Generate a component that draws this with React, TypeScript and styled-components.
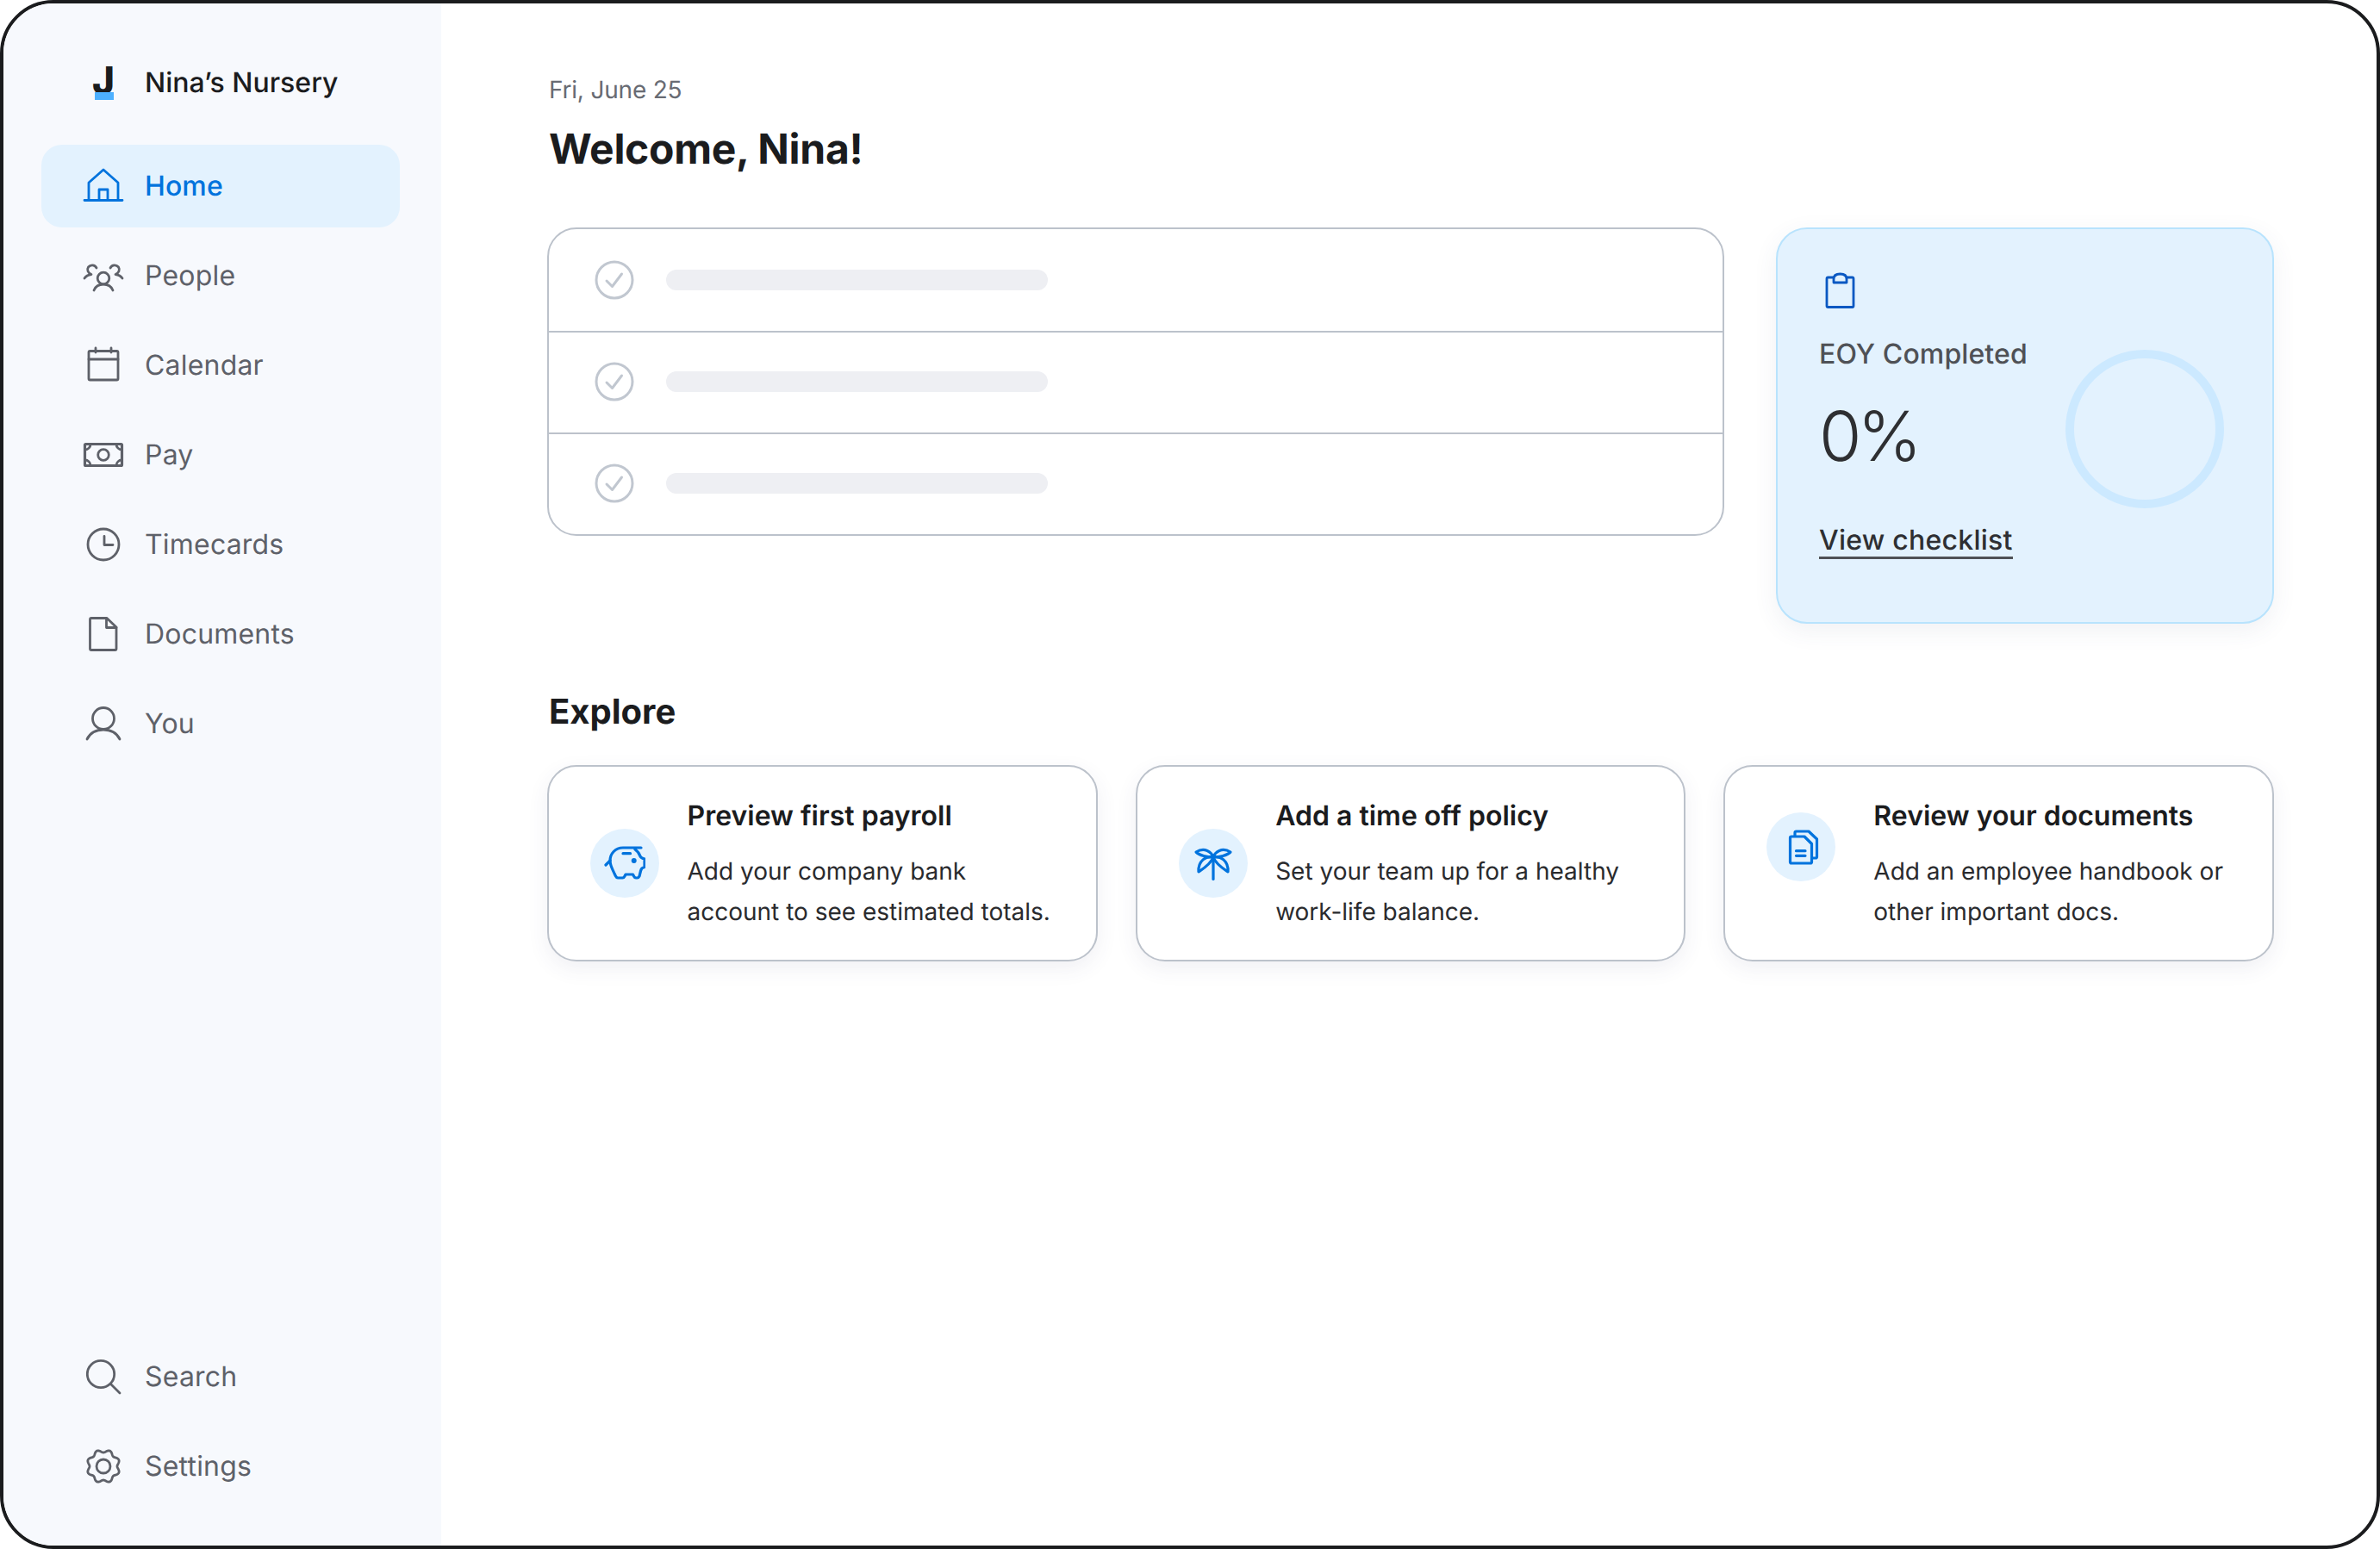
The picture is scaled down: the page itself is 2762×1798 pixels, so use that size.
import React from "react";
import styled, { createGlobalStyle } from "styled-components";

const Global = createGlobalStyle`
  html, body { margin: 0; padding: 0; background: #fff; }
  body { font-family: Inter, "Liberation Sans", sans-serif; text-rendering: geometricPrecision; }
  * { box-sizing: border-box; }
`;

const Frame = styled.div`
  width: 2762px; height: 1798px; display: flex; overflow: hidden;
  border: 4px solid #1b1c1e; border-radius: 62px; background: #fff;
`;
const Sidebar = styled.aside`
  width: 508px; flex: none; display: flex; flex-direction: column;
  padding: 44px 48px 44px 44px; background: #f7f9fd;
`;
const Brand = styled.div`
  height: 96px; margin-bottom: 24px; display: flex; align-items: center; gap: 24px; padding-left: 48px;
  font-size: 32px; font-weight: 500; color: #1b1c1e;
`;
const LogoMark = styled.span`
  position: relative; width: 48px; height: 48px; flex: none; display: block;
  font-size: 44px; line-height: 42px; font-weight: 800; text-align: center; color: #1b1c1e;
  &::after {
    content: ""; position: absolute; left: 14px; top: 35px; width: 22px; height: 9px; background: #4db0ff;
  }
`;
const BrandName = styled.span`
  margin-bottom: 2px;
`;
const NavList = styled.nav<{ $bottom?: boolean }>`
  display: flex; flex-direction: column; gap: 8px;
  margin-top: ${(p) => (p.$bottom ? "auto" : "0")};
`;
const NavItem = styled.a<{ $active?: boolean }>`
  height: 96px; display: flex; align-items: center; gap: 24px; padding-left: 48px;
  border-radius: 24px; font-size: 32px;
  letter-spacing: ${(p) => (p.$active ? "0.1px" : "0.2px")};
  font-weight: ${(p) => (p.$active ? 500 : 400)};
  color: ${(p) => (p.$active ? "#0073dd" : "#5e6169")};
  background: ${(p) => (p.$active ? "#e3f2fe" : "transparent")};
`;
const NavLabel = styled.span`
  margin-bottom: 2px;
`;
const Glyph = styled.svg<{ $weight?: number }>`
  width: 48px; height: 48px; flex: none; display: block; fill: none; stroke: currentColor;
  stroke-width: ${(p) => p.$weight ?? 2.8}; stroke-linecap: round; stroke-linejoin: round;
`;
const PayFrame = styled.rect`
  stroke-width: 3.2;
`;
const Main = styled.main`
  flex: 1; min-width: 0; padding: 80px 119px 0 123px; display: flex; flex-direction: column;
`;
const DateLine = styled.div`
  height: 40px; line-height: 40px; margin-left: 2px; font-size: 28px; letter-spacing: -0.2px; color: #686b73;
`;
const Title = styled.h1`
  margin: 19px 0 0 2px; height: 60px; line-height: 60px; font-size: 48px; font-weight: 700;
  letter-spacing: -0.3px; color: #1b1c1e;
`;
const TopRow = styled.div`
  margin-top: 61px; display: grid; grid-template-columns: 1366px 578px; gap: 60px; align-items: start;
`;
const Checklist = styled.div`
  height: 358px; border: 2px solid #bcc2cb; border-radius: 34px; display: grid; grid-template-rows: repeat(3, 1fr);
  overflow: hidden; background: #fff;
`;
const CheckRow = styled.div`
  display: flex; align-items: center; gap: 36px; padding-left: 52px;
  & + & { border-top: 2px solid #bcc2cb; padding-bottom: 2px; }
`;
const CheckGlyph = styled(Glyph)`
  color: #c1c7d0; stroke-width: 3;
`;
const Placeholder = styled.div`
  width: 443px; height: 24px; border-radius: 12px; background: #eeeff3;
`;
const Progress = styled.section`
  position: relative; height: 460px; padding: 49px 48px 0; border: 2px solid #b8e3fd; border-radius: 36px;
  background: #e3f2fe; box-shadow: 0 8px 28px rgba(60, 80, 120, 0.08);
`;
const ClipGlyph = styled(Glyph)`
  color: #0a58c2; margin: 0 0 28px 2px;
`;
const ProgressLabel = styled.div`
  font-size: 32px; line-height: 40px; font-weight: 500; letter-spacing: 0.1px; color: #4f5156;
`;
const Percent = styled.div`
  margin-top: 28px; font-size: 80px; line-height: 96px; font-weight: 300; color: #2e2f32; letter-spacing: -5px;
`;
const ChecklistLink = styled.a`
  display: inline-block; margin-top: 53px; font-size: 32px; line-height: 38px; font-weight: 500; color: #2e2f32;
  letter-spacing: 0.25px; border-bottom: 3px solid #4f5156;
`;
const Ring = styled.div`
  position: absolute; left: 333.5px; top: 140px; width: 184px; height: 184px; border-radius: 50%;
  border: 10px solid #cce9ff;
`;
const SectionTitle = styled.h2`
  margin: 77px 0 0 2px; height: 50px; line-height: 50px; font-size: 40px; font-weight: 700; color: #1b1c1e;
`;
const CardGrid = styled.div`
  margin-top: 37px; display: grid; grid-template-columns: repeat(3, 1fr); gap: 44px;
`;
const Card = styled.article<{ $raised?: boolean }>`
  height: 228px; border: 2px solid #bcc2cb; border-radius: 34px; background: #fff;
  box-shadow: 0 8px 24px rgba(60, 70, 110, 0.08);
  display: flex; align-items: ${(p) => (p.$raised ? "flex-start" : "center")};
  padding-left: 48px; gap: ${(p) => (p.$raised ? "44px" : "32.5px")};
`;
const IconDisc = styled.div<{ $raised?: boolean }>`
  width: 80px; height: 80px; flex: none; border-radius: 50%; background: #e3f2fe; color: #0073dd;
  display: flex; align-items: center; justify-content: center;
  margin-top: ${(p) => (p.$raised ? "53px" : "0")};
`;
const CardBody = styled.div`
  align-self: flex-start; padding-top: 37px;
`;
const CardTitle = styled.h3`
  margin: 0; font-size: 32px; line-height: 40px; font-weight: 600; color: #1b1c1e;
`;
const CardText = styled.p`
  margin: 20.5px 0 0; font-size: 28px; line-height: 47px; color: #2a2b2e; white-space: pre-line;
`;

const gearPath = (() => {
  const pts: string[] = [];
  for (let i = 0; i < 160; i++) {
    const t = (i / 160) * Math.PI * 2;
    const r = 17.7 - 1.7 * Math.cos(8 * t);
    pts.push(`${(24 + r * Math.sin(t)).toFixed(2)} ${(24 - r * Math.cos(t)).toFixed(2)}`);
  }
  return `M${pts.join("L")}Z`;
})();

const HomeIcon = () => (
  <Glyph viewBox="0 0 48 48">
    <path d="M2 40.5H46M7 40V20L24 5L41 20V40M19 40V28H29V40" />
  </Glyph>
);
const PeopleIcon = () => (
  <Glyph viewBox="0 0 48 48">
    <circle cx="24" cy="27" r="6.8" />
    <path d="M13 41C15 36 19 34 24 34C29 34 33 36 35 41" />
    <path d="M2 27C4 24 6.5 23 10 22.5C6 21 4.5 17 6.5 14C9 11 14 11 16 15" />
    <path d="M46 27C44 24 41.5 23 38 22.5C42 21 43.5 17 41.5 14C39 11 34 11 32 15" />
  </Glyph>
);
const CalendarIcon = () => (
  <Glyph viewBox="0 0 48 48">
    <rect x="7" y="7.5" width="34" height="33.5" rx="1.5" />
    <path d="M7 17H41M15 4V9M33 4V9" />
  </Glyph>
);
const PayIcon = () => (
  <Glyph viewBox="0 0 48 48">
    <PayFrame x="2.5" y="11.5" width="43" height="25" rx="1" />
    <circle cx="24" cy="24" r="6.3" />
    <path d="M9 12C9 15 6 18 3 18M39 12C39 15 42 18 45 18M9 36C9 33 6 30 3 30M39 36C39 33 42 30 45 30" />
  </Glyph>
);
const ClockIcon = () => (
  <Glyph viewBox="0 0 48 48">
    <circle cx="24" cy="24" r="18" />
    <path d="M25 14.5V24.5H35" />
  </Glyph>
);
const DocIcon = () => (
  <Glyph viewBox="0 0 48 48">
    <path d="M10 5.5H28L39 16V41C39 42 38.5 42.5 37.5 42.5H10C9 42.5 8.5 42 8.5 41V7C8.5 6 9 5.5 10 5.5Z" />
    <path d="M27.5 6V16.5H39" />
  </Glyph>
);
const UserIcon = () => (
  <Glyph viewBox="0 0 48 48">
    <circle cx="24" cy="18" r="12.5" />
    <path d="M5 42C9 34 16 31 24 31C32 31 39 34 43 42" />
  </Glyph>
);
const SearchIcon = () => (
  <Glyph viewBox="0 0 48 48">
    <circle cx="21" cy="21" r="15.7" />
    <path d="M32.5 32.5L43 43" />
  </Glyph>
);
const GearIcon = () => (
  <Glyph viewBox="0 0 48 48">
    <path d={gearPath} />
    <circle cx="24" cy="24" r="8" />
  </Glyph>
);
const CheckIcon = () => (
  <CheckGlyph viewBox="0 0 48 48">
    <circle cx="24" cy="24" r="21" />
    <path d="M15 25L21.5 31.5L32.5 17" />
  </CheckGlyph>
);
const ClipboardIcon = () => (
  <ClipGlyph viewBox="0 0 48 48">
    <path d="M14 7H8.5C7.5 7 7 7.5 7 8.5V40C7 41 7.5 41.5 8.5 41.5H36.5C37.5 41.5 38 41 38 40V8.5C38 7.5 37.5 7 36.5 7H31" />
    <path d="M15 13V9C15 5 18 3 22.5 3C27 3 30 5 30 9V13Z" />
  </ClipGlyph>
);
const PigIcon = () => (
  <Glyph viewBox="0 0 48 48" $weight={3.2}>
    <path d="M43 6H22C13 6 7 13 7 21C7 27 10 31 12 36L13.5 39C14 40 14.5 41 16 41H21.5C23 41 23.5 40 24 39L25 37H33.5L34.5 39C35 40 35.5 41 37 41H38.5C40 41 40.5 40 41 39L42.5 33C43 30 44 29 47 28.5V19C45 18.5 43 18 42 16C41 13 39 10 36 8" />
    <path d="M7 21L2 26M22 12.7H30.5" />
    <circle cx="34.7" cy="21" r="1.4" fill="currentColor" />
  </Glyph>
);
const PalmIcon = () => (
  <Glyph viewBox="0 0 48 48" $weight={3.2}>
    <path d="M24 17V42.5" />
    <path d="M24 17C22 11 14 5 4 11C8 15 17 17 24 17Z" />
    <path d="M24 17C16 15 6 21 7 34C13 30 21 25 24 17Z" />
    <path d="M24 17C26 11 34 5 44 11C40 15 31 17 24 17Z" />
    <path d="M24 17C32 15 42 21 41 34C35 30 27 25 24 17Z" />
  </Glyph>
);
const DocsIcon = () => (
  <Glyph viewBox="0 0 48 48" $weight={3.2}>
    <path d="M13 12H28L36.5 20.5V41.5C36.5 42.5 36 43 35 43H13C12 43 11.5 42.5 11.5 41.5V13.5C11.5 12.5 12 12 13 12Z" />
    <path d="M17 11V7.5C17 6.5 17.5 6 18.5 6H33L42.5 15V35.5C42.5 36.5 42 37 41 37H37" />
    <path d="M18.5 28.7H29M18.5 34.3H29" />
  </Glyph>
);

const mainNav = [
  { label: "Home", icon: <HomeIcon />, active: true },
  { label: "People", icon: <PeopleIcon /> },
  { label: "Calendar", icon: <CalendarIcon /> },
  { label: "Pay", icon: <PayIcon /> },
  { label: "Timecards", icon: <ClockIcon /> },
  { label: "Documents", icon: <DocIcon /> },
  { label: "You", icon: <UserIcon /> },
];
const footNav = [
  { label: "Search", icon: <SearchIcon /> },
  { label: "Settings", icon: <GearIcon /> },
];
const cards = [
  { title: "Preview first payroll", text: "Add your company bank\naccount to see estimated totals.", icon: <PigIcon /> },
  { title: "Add a time off policy", text: "Set your team up for a healthy\nwork-life balance.", icon: <PalmIcon /> },
  { title: "Review your documents", text: "Add an employee handbook or\nother important docs.", icon: <DocsIcon />, raised: true },
];

export default function App() {
  return (
    <>
      <Global />
      <Frame>
        <Sidebar>
          <Brand>
            <LogoMark>J</LogoMark>
            <BrandName>Nina’s Nursery</BrandName>
          </Brand>
          <NavList>
            {mainNav.map((n) => (
              <NavItem key={n.label} $active={n.active}>
                {n.icon}
                <NavLabel>{n.label}</NavLabel>
              </NavItem>
            ))}
          </NavList>
          <NavList $bottom>
            {footNav.map((n) => (
              <NavItem key={n.label}>
                {n.icon}
                <NavLabel>{n.label}</NavLabel>
              </NavItem>
            ))}
          </NavList>
        </Sidebar>
        <Main>
          <DateLine>Fri, June 25</DateLine>
          <Title>Welcome, Nina!</Title>
          <TopRow>
            <Checklist>
              {[0, 1, 2].map((i) => (
                <CheckRow key={i}>
                  <CheckIcon />
                  <Placeholder />
                </CheckRow>
              ))}
            </Checklist>
            <Progress>
              <ClipboardIcon />
              <ProgressLabel>EOY Completed</ProgressLabel>
              <Percent>0%</Percent>
              <ChecklistLink>View checklist</ChecklistLink>
              <Ring />
            </Progress>
          </TopRow>
          <SectionTitle>Explore</SectionTitle>
          <CardGrid>
            {cards.map((c) => (
              <Card key={c.title} $raised={c.raised}>
                <IconDisc $raised={c.raised}>{c.icon}</IconDisc>
                <CardBody>
                  <CardTitle>{c.title}</CardTitle>
                  <CardText>{c.text}</CardText>
                </CardBody>
              </Card>
            ))}
          </CardGrid>
        </Main>
      </Frame>
    </>
  );
}
